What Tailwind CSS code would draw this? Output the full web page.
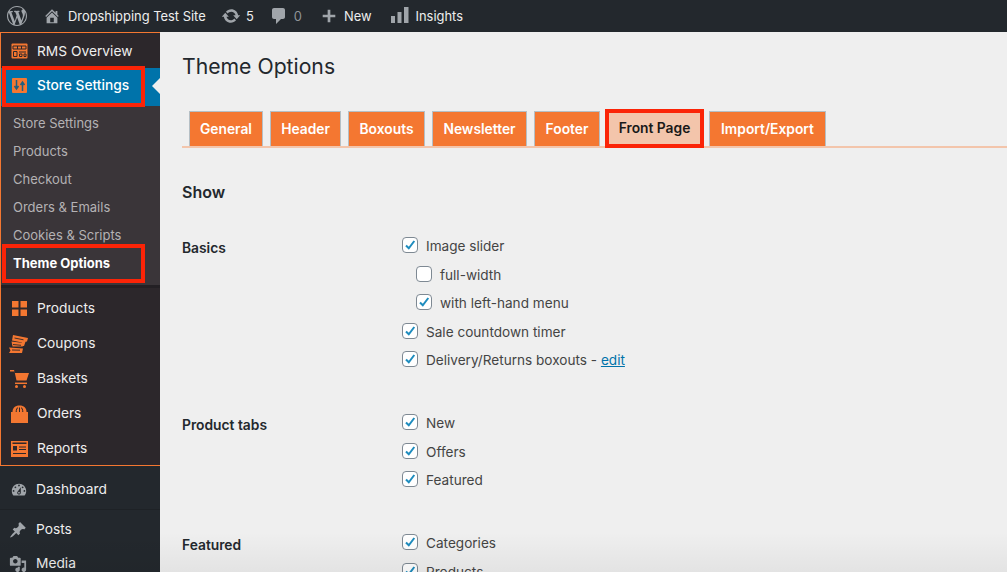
<!DOCTYPE html>
<html lang="en">
<head>
  <meta charset="UTF-8">
  <title>Theme Options</title>
  <script src="https://cdn.jsdelivr.net/npm/@tailwindcss/browser@4"></script>
</head>
<body class="bg-[#efefef] font-['Inter','Liberation_Sans',sans-serif]">
<div class="relative h-[572px] w-[1007px] overflow-hidden">
  <!-- Admin bar -->
  <header class="flex h-[32px] items-center bg-[#23282d] text-[12.9px] text-[#eee]">
    <svg class="ml-[7px] h-[20px] w-[20px] fill-[#a0a5aa]" viewBox="0 0 20 20"><path d="M20 10c0-5.51-4.49-10-10-10C4.48 0 0 4.49 0 10c0 5.52 4.48 10 10 10 5.51 0 10-4.48 10-10zM7.78 15.37L4.37 6.22c.55-.02 1.17-.08 1.17-.08.5-.06.44-1.13-.06-1.11 0 0-1.45.11-2.37.11-.18 0-.37 0-.58-.01C4.12 2.69 6.87 1.11 10 1.11c2.33 0 4.45.87 6.05 2.34-.68-.11-1.65.39-1.65 1.58 0 .74.45 1.36.9 2.1.35.61.55 1.36.55 2.46 0 1.49-1.4 5-1.4 5l-3.03-8.37c.54-.02.82-.17.82-.17.5-.05.44-1.25-.06-1.22 0 0-1.44.12-2.38.12-.87 0-2.33-.12-2.33-.12-.5-.03-.56 1.2-.06 1.22l.92.08 1.26 3.41zM17.41 10c.24-.64.74-1.87.43-4.25.7 1.29 1.05 2.71 1.05 4.25 0 3.29-1.73 6.24-4.4 7.78.97-2.59 1.94-5.2 2.92-7.78zM6.1 18.09C3.12 16.65 1.11 13.53 1.11 10c0-1.3.23-2.48.72-3.59C3.25 10.3 4.67 14.2 6.1 18.09zm4.03-6.63l2.58 6.98c-.86.29-1.76.45-2.71.45-.79 0-1.57-.11-2.29-.33.81-2.38 1.62-4.74 2.42-7.1z"/></svg>
    <svg class="ml-[16px] h-[18px] w-[18px] fill-[#a0a5aa]" viewBox="0 0 20 20"><path d="M16 8.5l1.53 1.53-1.06 1.06L10 4.62l-6.47 6.47-1.06-1.06L10 2.5l4 4v-2h2v4zm-6-2.46l6 5.99V18H4v-5.97zM12 17v-5H8v5h4z"/></svg>
    <span class="ml-[7px] w-[137px] whitespace-nowrap pt-[1px]">Dropshipping Test Site</span>
    <svg class="ml-[16px] h-[20px] w-[20px] fill-[#a0a5aa]" viewBox="0 0 20 20"><path d="M10.2 3.28c3.53 0 6.43 2.61 6.92 6h2.08l-3.5 4-3.5-4h2.32c-.45-1.97-2.21-3.45-4.32-3.45-1.45 0-2.73.71-3.54 1.78L4.95 5.66C6.23 4.2 8.11 3.28 10.2 3.28zm-.4 13.44c-3.52 0-6.43-2.61-6.92-6H.8l3.5-4c1.17 1.33 2.33 2.67 3.5 4H5.48c.45 1.97 2.21 3.45 4.32 3.45 1.45 0 2.73-.71 3.54-1.78l1.71 1.95c-1.28 1.46-3.15 2.38-5.25 2.38z"/></svg>
    <span class="ml-[5px] pt-[1px]">5</span>
    <svg class="ml-[15px] h-[20px] w-[20px] fill-[#a0a5aa]" viewBox="0 0 20 20"><path d="M5 2h9c1.1 0 2 .9 2 2v7c0 1.1-.9 2-2 2h-2l-5 5v-5H5c-1.1 0-2-.9-2-2V4c0-1.1.9-2 2-2z"/></svg>
    <span class="ml-[5px] pt-[1px] text-[#8f9498]">0</span>
    <svg class="ml-[18px] h-[18px] w-[18px] fill-[#a0a5aa]" viewBox="0 0 20 20"><path d="M17 8.5v3h-5.500V17h-3v-5.500H3v-3h5.500V3h3v5.500H17z"/></svg>
    <span class="ml-[6px] pt-[1px]">New</span>
    <svg class="ml-[19px] h-[18px] w-[18px] fill-[#a0a5aa]" viewBox="0 0 18 18"><rect x="0" y="9" width="4" height="7"/><rect x="6.500" y="5" width="4" height="11"/><rect x="13" y="0" width="4.500" height="16"/></svg>
    <span class="ml-[7px] pt-[1px]">Insights</span>
  </header>

  <div class="flex">
    <!-- Sidebar -->
    <nav class="h-[540px] w-[160px] shrink-0 overflow-hidden bg-[#23282d] text-[13.75px] text-[#eee]">
      <div class="border-t border-l border-[#f47731] bg-[#2c272b]">
        <a class="flex h-[35px] items-center pt-[1px] pl-[10px]">
          <svg class="h-[16px] w-[17px]" viewBox="0 0 17 16"><rect x="0.500" y="0.500" width="16" height="15" rx="1" fill="#f47731"/><path d="M2 3h13v3H2zM6.500 3v3M10.500 3v3M2.500 8.500h3.500v5H2.500zM8 9h7M8.500 11h2.500v2.500H8.500zM13 11h2v2.500h-2z" fill="none" stroke="#2c272b" stroke-width="1"/></svg>
          <span class="ml-[9px]">RMS Overview</span>
        </a>
        <a class="relative flex h-[38px] items-center bg-[#0073aa] pb-[3px] pl-[11px] font-medium text-white">
          <svg class="h-[15px] w-[15px]" viewBox="0 0 15 15"><rect width="15" height="15" rx="1" fill="#f47731"/><path d="M4.500 2v8M2.500 8l2 3 2-3M10.500 13V5M8.500 7l2-3 2 3" fill="none" stroke="#1d5f82" stroke-width="1.500"/></svg>
          <span class="ml-[10px]">Store Settings</span>
          <span class="absolute top-[10px] right-0 h-0 w-0 border-y-[8px] border-r-[8px] border-y-transparent border-r-[#efefef]"></span>
          <span class="absolute top-[-2px] right-[15px] bottom-[-1px] left-[1px] border-[4px] border-[#fb2407]"></span>
        </a>
        <ul class="bg-[#3a3539] pt-[4px] pb-[7px] text-[13px] text-[#b4b2b4]">
          <li class="flex h-[28px] items-center pl-[12px]">Store Settings</li>
          <li class="flex h-[28px] items-center pl-[12px]">Products</li>
          <li class="flex h-[28px] items-center pl-[12px]">Checkout</li>
          <li class="flex h-[28px] items-center pl-[12px]">Orders &amp; Emails</li>
          <li class="flex h-[28px] items-center pl-[12px]">Cookies &amp; Scripts</li>
          <li class="relative flex h-[28px] items-center pl-[12px] font-bold text-white">Theme Options
            <span class="absolute top-[-6px] right-[15px] bottom-[-5px] left-[1px] border-[4px] border-[#fb2407]"></span>
          </li>
        </ul>
        <div class="h-[3px] bg-[#232024]"></div>
        <a class="mt-[3px] flex h-[35px] items-center pl-[11px]">
          <svg class="h-[15px] w-[15px] fill-[#f47731]" viewBox="0 0 15 15"><rect width="6.500" height="6.500"/><rect x="8.500" width="6.500" height="6.500"/><rect y="8.500" width="6.500" height="6.500"/><rect x="8.500" y="8.500" width="6.500" height="6.500"/></svg>
          <span class="ml-[10px]">Products</span>
        </a>
        <a class="flex h-[35px] items-center pl-[8px]">
          <svg class="h-[20px] w-[20px] fill-[#f47731]" viewBox="0 0 20 20"><path d="M4 1l15 3-1 3.500-1.500.3L15 12H12l1-3.500-10-2zM2.500 7.500l12 1.500-.8 3.500H3.500zM0 13.500l14 1-1 4.500H0l1.500-2.500z"/><path d="M5.500 4l9 1.800M4 10.500l8 .8M3 16l8 .2" stroke="#2c272b" stroke-width=".9"/></svg>
          <span class="ml-[8px]">Coupons</span>
        </a>
        <a class="flex h-[35px] items-center pl-[9px]">
          <svg class="h-[19px] w-[19px]" viewBox="0 0 19 19"><path d="M0 1h4l1 3h14l-2.500 7.500H6.500L4.500 2.500H0z" fill="#f47731"/><path d="M5 14.300h12" stroke="#f47731" stroke-width="1.500"/><circle cx="6.500" cy="17.500" r="1.500" fill="#f47731"/><circle cx="14.500" cy="17.500" r="1.500" fill="#f47731"/></svg>
          <span class="ml-[8px]">Baskets</span>
        </a>
        <a class="flex h-[35px] items-center pl-[10px]">
          <svg class="h-[18px] w-[17px]" viewBox="0 0 17 18"><path d="M0 7h17v11H0z" fill="#f47731"/><path d="M1.500 7C1.500 3 4 .5 8.500 .5S15.500 3 15.500 7z" fill="#f47731"/><path d="M5.200 7c0-2.500.8-4 1.800-4.500M8.500 2.500V7M11.800 7c0-2.500-.8-4-1.800-4.500" fill="none" stroke="#2c272b" stroke-width="1"/></svg>
          <span class="ml-[9px]">Orders</span>
        </a>
        <a class="mb-[-1px] flex h-[35px] items-center pl-[10px]">
          <svg class="h-[16px] w-[17px]" viewBox="0 0 17 16"><rect width="17" height="16" fill="#f47731"/><rect x="1.500" y="1.500" width="14" height="1.500" fill="#2c272b"/><path d="M2 5h4v4.500H2z" fill="#2c272b"/><path d="M8 6h7M8 8.500h7M2 12.500h13" stroke="#2c272b" stroke-width="1.200" fill="none"/></svg>
          <span class="ml-[9px]">Reports</span>
        </a>
      </div>
      <div class="h-[1px] bg-[#f47731]"></div>
      <a class="mt-[4px] flex h-[40px] items-center border-b border-[#1e2226] pl-[10px]">
        <svg class="h-[18px] w-[18px] fill-[#a0a5aa]" viewBox="0 0 20 20"><path d="M3.760 16h12.480c1.100-1.370 1.760-3.110 1.760-5 0-4.420-3.580-8-8-8s-8 3.580-8 8c0 1.890.66 3.630 1.760 5zM10 4c.55 0 1 .45 1 1s-.45 1-1 1-1-.45-1-1 .45-1 1-1zM6 6c.55 0 1 .45 1 1s-.45 1-1 1-1-.45-1-1 .45-1 1-1zm8 0c.55 0 1 .45 1 1s-.45 1-1 1-1-.45-1-1 .45-1 1-1zm-5.370 5.550L12 7v6c0 1.100-.9 2-2 2s-2-.9-2-2c0-.57.24-1.080.63-1.450zM4 10c.55 0 1 .45 1 1s-.45 1-1 1-1-.45-1-1 .45-1 1-1zm12 0c.55 0 1 .45 1 1s-.45 1-1 1-1-.45-1-1 .45-1 1-1zm-5 3c0-.55-.45-1-1-1s-1 .45-1 1 .45 1 1 1 1-.45 1-1z"/></svg>
        <span class="ml-[8px]">Dashboard</span>
      </a>
      <a class="flex h-[39px] items-center pl-[9px]">
        <svg class="h-[18px] w-[18px] fill-[#a0a5aa]" viewBox="0 0 20 20"><path d="M10.440 3.020l1.820-1.820 6.360 6.350-1.830 1.820c-1.050-.68-2.480-.57-3.410.36l-.75.75c-.92.93-1.040 2.350-.35 3.410l-1.830 1.820-2.410-2.410-2.800 2.790c-.42.42-3.380 2.710-3.800 2.290s1.860-3.390 2.280-3.810l2.790-2.790L4.100 9.360l1.830-1.820c1.050.69 2.480.57 3.400-.36l.75-.75c.93-.92 1.050-2.350.36-3.410z"/></svg>
        <span class="ml-[9px]">Posts</span>
      </a>
      <a class="flex h-[29px] items-center pl-[9px]">
        <svg class="h-[18px] w-[18px] fill-[#a0a5aa]" viewBox="0 0 20 20"><path d="M13 11V4c0-.55-.45-1-1-1h-1.670L9 1H5L3.670 3H2c-.55 0-1 .45-1 1v7c0 .55.45 1 1 1h10c.55 0 1-.45 1-1zM7 4.500c1.380 0 2.500 1.120 2.500 2.500S8.380 9.500 7 9.500 4.500 8.380 4.500 7 5.620 4.500 7 4.500zM14 6h5v10.500c0 1.380-1.120 2.500-2.500 2.500S14 17.880 14 16.500s1.120-2.500 2.500-2.500c.17 0 .34.02.5.05V9h-3V6zm-4 8.050V13h2v3.500c0 1.380-1.120 2.500-2.500 2.500S7 17.880 7 16.500 8.120 14 9.500 14c.17 0 .34.02.5.05z"/></svg>
        <span class="ml-[9px]">Media</span>
      </a>
    </nav>

    <!-- Content -->
    <main class="min-w-0 flex-1 pl-[22px] text-[13.8px] text-[#23282d]">
      <h1 class="pt-[20px] text-[21.2px] leading-[28px]">Theme Options</h1>
      <div class="mt-[31px] flex h-[37px] items-end gap-[7px] border-b-[2px] border-[#f3c5ab] pl-[7px] text-[13.8px] font-semibold text-white">
        <a class="flex h-[35px] w-[74px] items-center justify-center border border-b-0 border-[#b5bfc5] bg-[#f47731]">General</a>
        <a class="flex h-[35px] w-[71px] items-center justify-center border border-b-0 border-[#b5bfc5] bg-[#f47731]">Header</a>
        <a class="flex h-[35px] w-[77px] items-center justify-center border border-b-0 border-[#b5bfc5] bg-[#f47731]">Boxouts</a>
        <a class="flex h-[35px] w-[95px] items-center justify-center border border-b-0 border-[#b5bfc5] bg-[#f47731]">Newsletter</a>
        <a class="flex h-[35px] w-[66px] items-center justify-center border border-b-0 border-[#b5bfc5] bg-[#f47731]">Footer</a>
        <a class="z-10 mb-[-2px] ml-[-2px] flex h-[39px] w-[99px] items-center justify-center border-[4px] border-[#fb2407] bg-[#f3c5ab] text-[#191919]">Front Page</a>
        <a class="ml-[-2px] flex h-[35px] w-[117px] items-center justify-center border border-b-0 border-[#b5bfc5] bg-[#f47731]">Import/Export</a>
      </div>

      <h2 class="mt-[34px] text-[16px] leading-[20px] font-semibold">Show</h2>

      <section class="mt-[35px] grid grid-cols-[220px_1fr]">
        <h3 class="pt-[1px] font-semibold">Basics</h3>
        <div class="h-[177px] text-[13.6px] text-[#444]">
          <label class="flex h-[28.500px] items-start gap-[8px]"><span class="flex h-[16px] w-[16px] items-center justify-center rounded-[4px] border border-[#7e8993] bg-white"><svg class="h-[12px] w-[12px]" viewBox="0 0 12 12"><path d="M2 6.500l2.800 2.800L10.300 2" fill="none" stroke="#1e8cbe" stroke-width="2"/></svg></span><span class="mt-[-1px]">Image slider</span></label>
          <label class="ml-[14px] flex h-[28.500px] items-start gap-[8px]"><span class="h-[16px] w-[16px] rounded-[4px] border border-[#7e8993] bg-white"></span><span class="mt-[-1px]">full-width</span></label>
          <label class="ml-[14px] flex h-[28.500px] items-start gap-[8px]"><span class="flex h-[16px] w-[16px] items-center justify-center rounded-[4px] border border-[#7e8993] bg-white"><svg class="h-[12px] w-[12px]" viewBox="0 0 12 12"><path d="M2 6.500l2.800 2.800L10.300 2" fill="none" stroke="#1e8cbe" stroke-width="2"/></svg></span><span class="mt-[-1px]">with left-hand menu</span></label>
          <label class="flex h-[28.500px] items-start gap-[8px]"><span class="flex h-[16px] w-[16px] items-center justify-center rounded-[4px] border border-[#7e8993] bg-white"><svg class="h-[12px] w-[12px]" viewBox="0 0 12 12"><path d="M2 6.500l2.800 2.800L10.300 2" fill="none" stroke="#1e8cbe" stroke-width="2"/></svg></span><span class="mt-[-1px]">Sale countdown timer</span></label>
          <label class="flex h-[28.500px] items-start gap-[8px]"><span class="flex h-[16px] w-[16px] items-center justify-center rounded-[4px] border border-[#7e8993] bg-white"><svg class="h-[12px] w-[12px]" viewBox="0 0 12 12"><path d="M2 6.500l2.800 2.800L10.300 2" fill="none" stroke="#1e8cbe" stroke-width="2"/></svg></span><span class="mt-[-1px]">Delivery/Returns boxouts - <a class="text-[#0073aa] underline">edit</a></span></label>
        </div>
        <h3 class="pt-[1px] font-semibold">Product tabs</h3>
        <div class="h-[120px] text-[13.6px] text-[#444]">
          <label class="flex h-[28.500px] items-start gap-[8px]"><span class="flex h-[16px] w-[16px] items-center justify-center rounded-[4px] border border-[#7e8993] bg-white"><svg class="h-[12px] w-[12px]" viewBox="0 0 12 12"><path d="M2 6.500l2.800 2.800L10.300 2" fill="none" stroke="#1e8cbe" stroke-width="2"/></svg></span><span class="mt-[-1px]">New</span></label>
          <label class="flex h-[28.500px] items-start gap-[8px]"><span class="flex h-[16px] w-[16px] items-center justify-center rounded-[4px] border border-[#7e8993] bg-white"><svg class="h-[12px] w-[12px]" viewBox="0 0 12 12"><path d="M2 6.500l2.800 2.800L10.300 2" fill="none" stroke="#1e8cbe" stroke-width="2"/></svg></span><span class="mt-[-1px]">Offers</span></label>
          <label class="flex h-[28.500px] items-start gap-[8px]"><span class="flex h-[16px] w-[16px] items-center justify-center rounded-[4px] border border-[#7e8993] bg-white"><svg class="h-[12px] w-[12px]" viewBox="0 0 12 12"><path d="M2 6.500l2.800 2.800L10.300 2" fill="none" stroke="#1e8cbe" stroke-width="2"/></svg></span><span class="mt-[-1px]">Featured</span></label>
        </div>
        <h3 class="pt-[1px] font-semibold">Featured</h3>
        <div class="text-[13.6px] text-[#444]">
          <label class="flex h-[28.500px] items-start gap-[8px]"><span class="flex h-[16px] w-[16px] items-center justify-center rounded-[4px] border border-[#7e8993] bg-white"><svg class="h-[12px] w-[12px]" viewBox="0 0 12 12"><path d="M2 6.500l2.800 2.800L10.300 2" fill="none" stroke="#1e8cbe" stroke-width="2"/></svg></span><span class="mt-[-1px]">Categories</span></label>
          <label class="flex h-[28.500px] items-start gap-[8px]"><span class="flex h-[16px] w-[16px] items-center justify-center rounded-[4px] border border-[#7e8993] bg-white"><svg class="h-[12px] w-[12px]" viewBox="0 0 12 12"><path d="M2 6.500l2.800 2.800L10.300 2" fill="none" stroke="#1e8cbe" stroke-width="2"/></svg></span><span class="mt-[-1px]">Products</span></label>
        </div>
      </section>
    </main>
  </div>
  <!-- window shadow at the bottom of the capture -->
  <div class="pointer-events-none absolute inset-x-0 bottom-0 h-[40px] bg-gradient-to-b from-transparent to-black/5"></div>
</div>
</body>
</html>
